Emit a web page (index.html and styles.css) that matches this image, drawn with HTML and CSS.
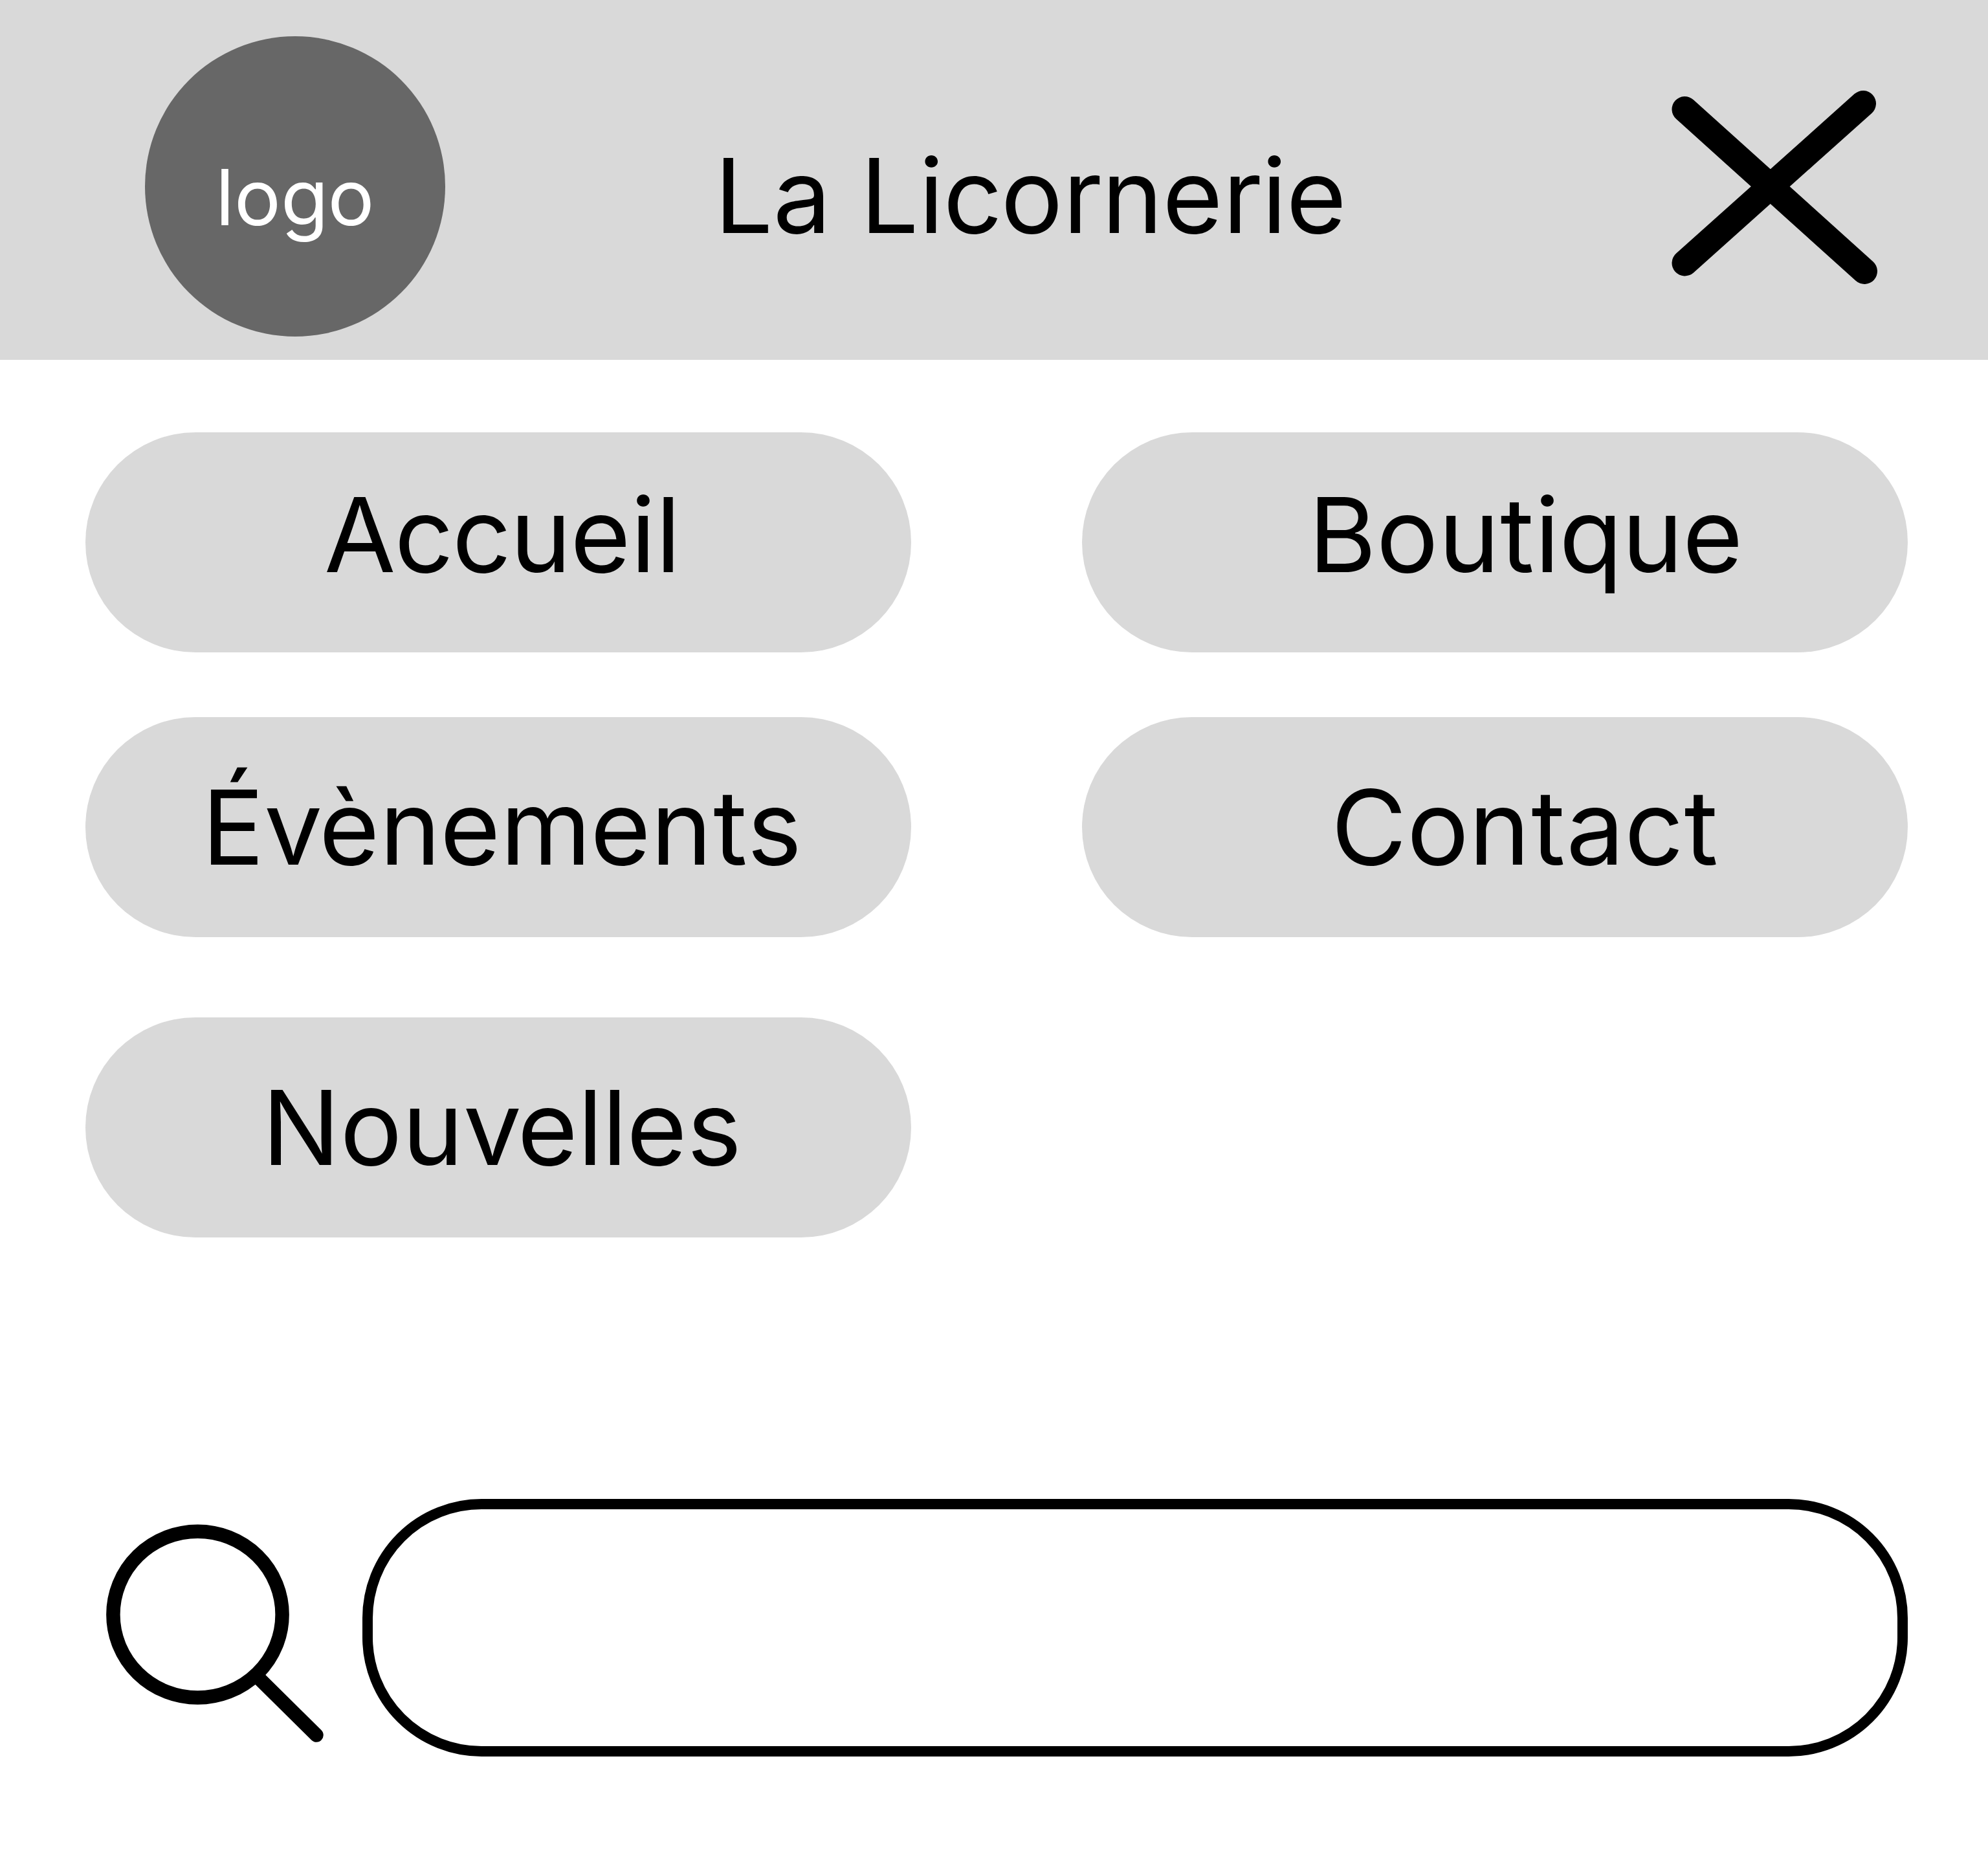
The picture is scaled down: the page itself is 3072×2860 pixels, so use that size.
FILE: index.html
```html
<!DOCTYPE html>
<html lang="fr">
<head>
<meta charset="utf-8">
<title>La Licornerie</title>
<link rel="stylesheet" href="styles.css">
</head>
<body>
<header class="header">
  <div class="logo">lo<span class="k-1">g</span>o</div>
  <h1 class="title">La L<span class="k-1">i</span><span class="k-25">c</span>or<span class="k-1">n</span>er<span class="k-1">i</span>e</h1>
  <svg class="close" viewBox="0 0 320 300" role="button" aria-label="Fermer">
    <path d="M23.5 29 L301 279 M23.5 266.500 L299 20"/>
  </svg>
</header>
<nav class="menu">
  <a class="pill pill-accueil"><span class="k-2">Acc</span><span class="k-15">u</span>eil</a>
  <a class="pill pill-boutique">Bo<span class="k1">ut</span><span class="k-1">iq</span><span class="k-1">u</span>e</a>
  <a class="pill pill-evenements">É<span class="k-45">v</span>è<span class="k-1">n</span>e<span class="k-1">m</span>e<span class="k2">n</span>ts</a>
  <a class="pill pill-contact">Co<span class="k15">nt</span>a<span class="k1">c</span>t</a>
  <a class="pill pill-nouvelles">Nou<span class="k-65">v</span>e<span class="k-1">ll</span>es</a>
</nav>
<div class="search">
  <svg class="loupe" viewBox="0 0 348 398">
    <ellipse cx="153.500" cy="178.700" rx="130.6" ry="128.4"/>
    <path d="M246 275 L337 365"/>
  </svg>
  <div class="field"></div>
</div>
</body>
</html>
```
FILE: styles.css
```css
* { box-sizing: border-box; }
body {
  margin: 0;
  width: 3072px;
  height: 2860px;
  overflow: hidden;
  background: #fff;
  color: #000;
  font-family: Inter, sans-serif;
  font-size: 160px;
  font-kerning: none;
  line-height: 194px;
}

/* pair spacing adjustments */
.k-65 { letter-spacing: -6.5px; }
.k-45 { letter-spacing: -5px; }
.k-25 { letter-spacing: -2.5px; }
.k-2 { letter-spacing: -2px; }
.k-15 { letter-spacing: -1.5px; }
.k-1 { letter-spacing: -1px; }
.k1 { letter-spacing: 1px; }
.k15 { letter-spacing: 1.8px; }
.k2 { letter-spacing: 2px; }

.header {
  display: flex;
  align-items: flex-start;
  height: 556px;
  background: #d9d9d9;
}
.logo {
  flex: none;
  width: 464px;
  height: 464px;
  margin: 56px 0 0 224px;
  padding: 176px 0 0 109px;
  border-radius: 50%;
  background: #676767;
  color: #fff;
  font-size: 120px;
  line-height: 145px;
}
.title {
  flex: none;
  width: 1000px;
  margin: 205px 0 0 416px;
  font-size: 160px;
  font-weight: 400;
  white-space: nowrap;
}
.close {
  flex: none;
  width: 320px;
  height: 300px;
  margin: 140px 0 0 476px;
  overflow: visible;
}
.close path {
  fill: none;
  stroke: #000;
  stroke-width: 40;
  stroke-linecap: round;
}
.menu {
  display: grid;
  grid-template-columns: 1276px 1276px;
  grid-template-rows: 340px 340px 340px;
  column-gap: 264px;
  row-gap: 100px;
  height: 1260px;
  margin: 112px 0 0 132px;
}
.pill {
  height: 340px;
  border-radius: 170px;
  background: #d9d9d9;
  padding-top: 73px;
  white-space: nowrap;
}
.pill-accueil { padding: 61px 0 0 369px; }
.pill-boutique { padding: 61px 0 0 350px; }
.pill-evenements { padding-left: 180px; }
.pill-contact { padding-left: 385px; }
.pill-nouvelles { padding-left: 273px; margin-top: 24px; }
.search {
  display: flex;
  margin: 388px 0 0 152px;
}
.loupe {
  flex: none;
  width: 348px;
  height: 398px;
}
.loupe ellipse, .loupe path {
  fill: none;
  stroke: #000;
  stroke-width: 21.5;
  stroke-linecap: round;
}
.field {
  width: 2388px;
  height: 398px;
  margin-left: 60px;
  border: 16px solid #000;
  border-radius: 184px;
}
```
